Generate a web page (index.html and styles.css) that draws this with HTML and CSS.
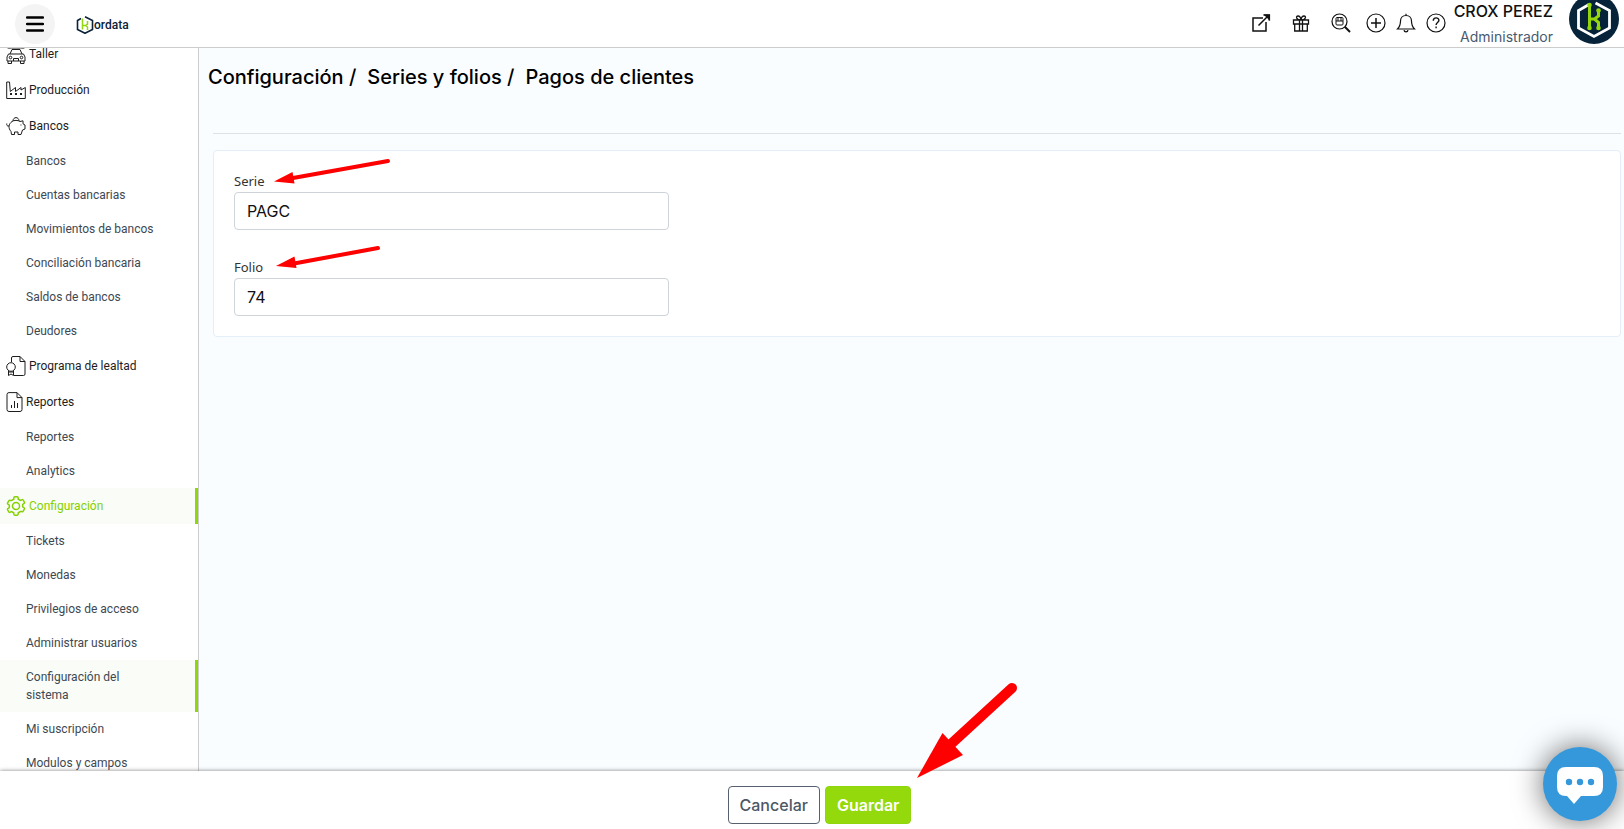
FILE: index.html
```html
<!DOCTYPE html>
<html lang="es">
<head>
<meta charset="utf-8">
<title>Kordata - Series y folios</title>
<link rel="stylesheet" href="styles.css">
</head>
<body>
<div class="app">
  <header class="topbar">
    <button class="menu-btn" type="button" aria-label="Menú">
      <svg width="18" height="16" viewBox="0 0 18 16"><path d="M1 1.500h16M1 8h16M1 14.500h16" stroke="#000" stroke-width="2.500" stroke-linecap="round"/></svg>
    </button>
    <a class="brand" href="#">
      <svg width="18" height="18" viewBox="0 0 18 18" fill="none"><path d="M5 2.500L1.500 4.500v9L9 17.300l7.500-3.800v-9L9 .8" stroke="#0b2239" stroke-width="1.600"/><path d="M6.500 2.500v11M6.500 9.500h3l2-1.500V5M9.500 9.500l2 1.500v3" stroke="#8fd60c" stroke-width="1.500"/></svg>
      <span>ordata</span>
    </a>
    <nav class="tools" aria-label="Herramientas">
      <div class="tool-group wide">
        <button class="tool" type="button" aria-label="Abrir"><svg viewBox="0 0 20 20"><path d="M12 5H2v13h13V9M7.500 12.500L18 2M12.500 2H18.200v5.500" stroke-width="1.500"/><path d="M14 2h4.500v4.500z" fill="#111"/></svg></button>
        <button class="tool" type="button" aria-label="Regalos"><svg viewBox="0 0 20 20"><path d="M2.500 7h15v4h-15zM3.700 11v7h12.600v-7M8.500 7v11M11.500 7v11M10 7C5 7 4.500 3 7 3s3 4 3 4 .5-4 3-4 2 4-3 4" stroke-width="1.300"/></svg></button>
        <button class="tool" type="button" aria-label="Buscar"><svg viewBox="0 0 20 20"><circle cx="8.500" cy="8.500" r="7.500"/><path d="M5 5.500q0-1 1-1h5q1 0 1 1v5.500q0 1-1 1H6q-1 0-1-1zM5 8h7M7 4.500V8M10 4.500V8" stroke-width="1"/><path d="M13.800 13.800L19 19" stroke-width="2"/></svg></button>
      </div>
      <div class="tool-group">
        <button class="tool" type="button" aria-label="Agregar"><svg viewBox="0 0 20 20"><circle cx="10" cy="10" r="9"/><path d="M10 5v10M5 10h10" stroke-width="1.500"/></svg></button>
        <button class="tool" type="button" aria-label="Notificaciones"><svg viewBox="0 0 20 20"><path d="M1.500 16h17c-2-2-3-4-3-8 0-3-2-5.500-5.500-5.500S4.500 5 4.500 8c0 4-1 6-3 8zM10 .8v1.700M8 17.200c.3 2.200 3.700 2.200 4 0"/></svg></button>
        <button class="tool" type="button" aria-label="Ayuda"><svg viewBox="0 0 20 20"><circle cx="10" cy="10" r="9"/><path d="M7.300 7.700c0-3.800 5.600-3.700 5.600-.4 0 2.300-2.800 2.200-2.800 4.700M10.100 13.600v1.600" stroke-width="1.400"/></svg></button>
      </div>
    </nav>
    <div class="user"><span class="user-name">CROX PEREZ</span><span class="user-role">Administrador</span></div>
    <svg class="avatar" viewBox="0 6 50 44" fill="none"><circle cx="25" cy="25" r="25" fill="#06233a"/><path d="M20 10.500l-10.500 6v17.500L25 42.500l15.500-8.500V16.500L26.500 9" stroke="#fff" stroke-width="2.800"/><path d="M20.500 11v22M20.500 25h5l4-3v-6M25.500 25l4 3.500V34" stroke="#93d50b" stroke-width="3"/><g fill="#93d50b"><circle cx="20.500" cy="11" r="2.300"/><circle cx="20.500" cy="34" r="2.300"/><circle cx="29.500" cy="16.500" r="2.300"/><circle cx="29.500" cy="34" r="2.300"/></g></svg>
  </header>

  <div class="body">
    <aside class="sidebar">
      <ul class="menu">
        <li><a class="parent" href="#"><svg width="20" height="20" viewBox="0 0 20 20"><path d="M1 3.500c2 1.500 4 0 5 .5h8c1-.5 3 1 5-.5M4 10l2-4.500h8L16 10M2.500 10h15l1.500 3v4H1v-4zM2 17v2.500h3.500V17M14.500 17v2.500H18V17M7.500 17v-2.500h5V17"/><circle cx="4.500" cy="13.500" r="1.300"/><circle cx="15.500" cy="13.500" r="1.300"/></svg>Taller</a></li>
        <li><a class="parent" href="#"><svg width="20" height="20" viewBox="0 0 20 20"><path d="M.7 18.500V2H3.500l.8 9.500 5.200-4v4l5.500-4v2.500l4.300-2.500v11z"/><path d="M4 14h2M9 14h2M14 14h2" stroke-width="2"/></svg>Producción</a></li>
        <li><a class="parent" href="#"><svg width="20" height="20" viewBox="0 0 20 20"><path d="M6 5.500c2-1.500 6-1.500 8 0l3-.7v3L19 9v4l-2.500 1-1.500 4.500h-3V16H8.500v2.500h-3L5 15.500C2 12 2.500 8 6 5.500zM7 5c0-4.500 6-4.500 6 0M3 10C1 10.500.5 9 .8 7.500M14.500 9h1"/></svg>Bancos</a></li>
        <li><a class="child" href="#">Bancos</a></li>
        <li><a class="child" href="#">Cuentas bancarias</a></li>
        <li><a class="child" href="#">Movimientos de bancos</a></li>
        <li><a class="child" href="#">Conciliación bancaria</a></li>
        <li><a class="child" href="#">Saldos de bancos</a></li>
        <li><a class="child" href="#">Deudores</a></li>
        <li><a class="parent" href="#"><svg width="20" height="20" viewBox="0 0 20 20"><path d="M5.500 6V2q0-1.500 1.500-1.500h7l5 5V18q0 1.500-1.500 1.500H8M14 .5v5h5"/><circle cx="5" cy="11" r="4.300"/><path d="M2.500 15v4.500L5 18l2.500 1.500V15M2.500 16h5"/></svg>Programa de lealtad</a></li>
        <li><a class="parent" href="#"><svg width="17" height="20" viewBox="0 0 17 20"><path d="M3 .6h8l5 5V17.500q0 2-2 2H3q-2 0-2-2V2.600q0-2 2-2zM11 .6v5h5"/><path d="M5.500 16v-3M8.500 16V9M11.500 16v-5"/></svg>Reportes</a></li>
        <li><a class="child" href="#">Reportes</a></li>
        <li><a class="child" href="#">Analytics</a></li>
        <li><a class="parent active" href="#"><svg width="20" height="20" viewBox="1 1 18 18"><path d="M8 2.700q0-1 1-1h2q1 0 1 1v1.200l2 1.100 1.100-.6q.9-.5 1.400.4l1 1.700q.5.900-.4 1.400l-1.100.7v2.200l1.100.7q.9.500.4 1.400l-1 1.700q-.5.900-1.400.4L14 15l-2 1.100v1.200q0 1-1 1H9q-1 0-1-1v-1.200L6 15l-1.100.6q-.9.500-1.400-.4l-1-1.700q-.5-.9.400-1.400l1.100-.7V9.200l-1.100-.7q-.9-.5-.4-1.400l1-1.700q.5-.9 1.400-.4L6 5l2-1.100z" stroke-width="1.300"/><circle cx="10" cy="10" r="3.200" stroke-width="1.300"/></svg>Configuración</a></li>
        <li><a class="child" href="#">Tickets</a></li>
        <li><a class="child" href="#">Monedas</a></li>
        <li><a class="child" href="#">Privilegios de acceso</a></li>
        <li><a class="child" href="#">Administrar usuarios</a></li>
        <li><a class="child active" href="#">Configuración del sistema</a></li>
        <li><a class="child" href="#">Mi suscripción</a></li>
        <li><a class="child" href="#">Modulos y campos</a></li>
      </ul>
    </aside>

    <main class="content">
      <h1 class="crumbs"><span>Configuración /</span><span>Series y folios /</span><span>Pagos de clientes</span></h1>
      <form class="card" id="folio-form">
        <div class="field">
          <div class="label-row"><label for="serie">Serie</label>
            <svg class="arrow" width="118" height="28" viewBox="0 0 118 28"><path d="M19 21L114 4" stroke="#f00" stroke-width="4" stroke-linecap="round"/><path d="M0 24.500L18.500 15l2 11.500z" fill="#f00"/></svg>
          </div>
          <input id="serie" type="text" value="PAGC">
        </div>
        <div class="field">
          <div class="label-row"><label for="folio">Folio</label>
            <svg class="arrow" width="108" height="28" viewBox="0 0 108 28"><path d="M20 20.500L104 5" stroke="#f00" stroke-width="4" stroke-linecap="round"/><path d="M2 23L20.500 13.500l2 11.500z" fill="#f00"/></svg>
          </div>
          <input id="folio" type="text" value="74">
        </div>
      </form>
    </main>
  </div>

  <footer class="actions">
    <button class="btn cancel" type="button">Cancelar</button>
    <div class="save-wrap">
      <button class="btn save" type="submit" form="folio-form">Guardar</button>
      <svg class="big-arrow" width="102" height="98" viewBox="0 0 102 98"><path d="M34 63L95 7" stroke="#f00" stroke-width="10" stroke-linecap="round"/><path d="M0 97L25.500 52 46 74z" fill="#f00"/></svg>
    </div>
  </footer>
  <button class="chat" type="button" aria-label="Chat">
    <svg width="46" height="38" viewBox="0 0 46 38"><path d="M9 0h28q9 0 9 9v11q0 9-9 9H24l-7 8-7-8H9q-9 0-9-9V9q0-9 9-9z" fill="#fff"/><g fill="#3498db"><circle cx="12" cy="15" r="3.200"/><circle cx="23" cy="15" r="3.200"/><circle cx="34" cy="15" r="3.200"/></g></svg>
  </button>
</div>
</body>
</html>
```
FILE: styles.css
```css
* { box-sizing: border-box; }
body { margin: 0; font-family: Inter, "Liberation Sans", sans-serif; color: #111; }
button { font-family: inherit; cursor: pointer; }
a { text-decoration: none; color: inherit; }

.app { display: flex; flex-direction: column; height: 100vh; overflow: hidden; background: #fafdff; }

.topbar { display: flex; align-items: center; flex: 0 0 48px; padding: 0 5px 0 15px; background: #fff; border-bottom: 1px solid #ccc; }
.menu-btn { display: flex; align-items: center; justify-content: center; width: 40px; height: 40px; padding: 0; border: 0; border-radius: 50%; background: #f4f4f4; }
.brand { display: flex; align-items: center; margin-left: 21px; padding-top: 3px; color: #0b2239; font: 500 12px Roboto, sans-serif; }
.tools { display: flex; gap: 15px; margin-left: auto; }
.tool-group { display: flex; gap: 10px; }
.tool-group.wide { gap: 20px; }
.tool { display: flex; width: 20px; height: 20px; padding: 0; border: 0; background: none; }
.tool svg { width: 20px; height: 20px; margin-top: -1px; fill: none; stroke: #111; stroke-width: 1.2; }
.user { display: flex; flex-direction: column; align-items: flex-end; width: 107px; margin: -2px 16px -2px 0; line-height: 25px; white-space: nowrap; }
.user-name { font-size: 16px; font-weight: 500; }
.user-role { font-size: 14px; color: #475a70; }
.avatar { align-self: flex-start; width: 50px; height: 44px; }

.body { display: flex; flex: 1; min-height: 0; }
.sidebar { flex: 0 0 199px; overflow: hidden; background: #fff; border-right: 1px solid #ccc; }
.menu { margin: -12px 0 0; padding: 0; list-style: none; font: 12px/18px Roboto, sans-serif; }
.parent { display: flex; align-items: center; gap: 3px; height: 36px; padding-left: 6px; line-height: 12px; color: #1d1d1d; }
.parent svg { fill: none; stroke: currentColor; stroke-width: 1; }
.child { display: block; padding: 8px 50px 8px 26px; color: #3d4852; }
.child:not(.active) { padding-right: 10px; }
.active { background: #fafdf7; border-right: 3px solid #8fd60c; }
.parent.active { color: #83d100; }

.content { flex: 1; min-width: 0; padding: 0 3px 0 14px; }
.crumbs { display: flex; gap: 11px; margin: 0 0 16px; padding: 15px 0 41px; border-bottom: 1px solid #dee2e6; font-size: 20px; font-weight: 500; line-height: 29px; color: #000; }
.crumbs span:first-child { margin-left: -5px; }
.card { display: grid; grid-template-columns: repeat(3, 1fr); gap: 27px 30px; padding: 20px; background: #fff; border: 1px solid #e4eef8; border-radius: 4px; }
.field { grid-column: 1; display: flex; flex-direction: column; }
.label-row { display: flex; position: relative; font: 13px/21px "Noto Sans", sans-serif; color: #333; }
.field input { width: 100%; height: 38px; padding: 0 12px; border: 1px solid #ced4da; border-radius: 4px; background: #fff; color: #111; font: 16px Inter, sans-serif; }
.arrow { position: absolute; left: 40px; top: -14px; }

.actions { display: flex; align-items: center; justify-content: center; gap: 5px; flex: 0 0 58px; padding: 10px 0 0 15px; background: #fff; box-shadow: 0 0 4px rgba(0, 0, 0, .5); position: relative; }
.btn { height: 38px; padding: 0 11px; border-radius: 4px; font-size: 16px; line-height: 24px; }
.cancel { border: 1px solid #56606e; background: #fff; color: #4c5866; font-weight: 500; }
.save { border: 1px solid #8fd60c; background: #93d90c; color: #fff; font-weight: 600; }
.save-wrap { position: relative; }
.big-arrow { position: absolute; left: 92px; bottom: 45px; }

.chat { position: absolute; right: 7px; bottom: 8px; display: flex; align-items: center; justify-content: center; width: 74px; height: 74px; padding: 4px 0 0; border: 0; border-radius: 50%; background: #3498db; box-shadow: 0 0 30px rgba(0, 0, 0, .6); }
```
